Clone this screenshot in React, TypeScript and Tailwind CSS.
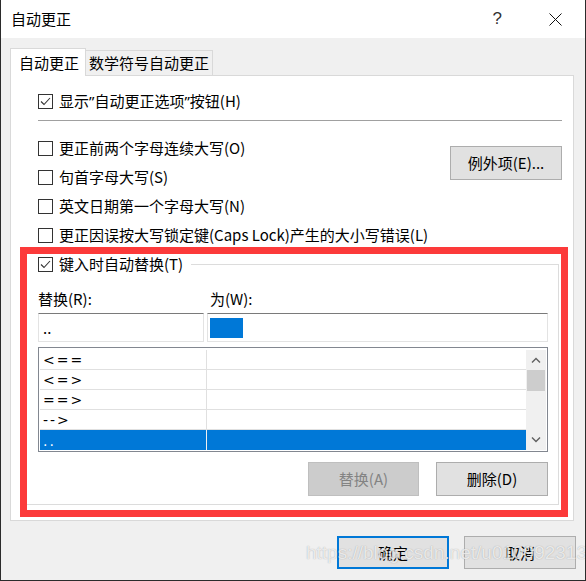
import React from 'react';

const font = { fontFamily: '"Noto Sans CJK SC", "Noto Sans", sans-serif' };
const latin = { fontFamily: '"Noto Sans", sans-serif' };

function CheckBox({ checked, label }: { checked?: boolean; label: React.ReactNode }) {
  return (
    <div className="flex items-center h-[20px] gap-[6px]">
      <div className="w-[15px] h-[15px] border border-[#333333] bg-white flex items-center justify-center shrink-0">
        {checked && (
          <svg width="11" height="11" viewBox="0 0 11 11">
            <path d="M1 5.5 L4 8.5 L10 2" stroke="#333" strokeWidth="1.1" fill="none" />
          </svg>
        )}
      </div>
      <span className="text-[15px] leading-[20px] text-black whitespace-nowrap">{label}</span>
    </div>
  );
}

function Btn({ children, disabled, primary, className }: { children: React.ReactNode; disabled?: boolean; primary?: boolean; className?: string }) {
  let cls = 'bg-[#e1e1e1] border border-[#adadad] text-black';
  if (disabled) cls = 'bg-[#cccccc] border border-[#bfbfbf] text-[#838383]';
  if (primary) cls = 'bg-[#e1e1e1] border-2 border-[#0078d7] text-black';
  return (
    <div className={`flex items-center justify-center text-[15px] leading-[20px] ${cls} ${className ?? ''}`}>{children}</div>
  );
}

const rows = ['<==', '<=>', '==>', '-->', '..'];

export default function App() {
  return (
    <div style={font} className="relative w-[586px] h-[581px] bg-[#f0f0f0] border-l border-r border-b border-[#2b2b2b] overflow-hidden select-none">
      {/* title bar */}
      <div className="h-[38px] bg-white flex items-center pl-[10px] pr-[23px]">
        <span className="text-[15px] leading-[20px] text-black">自动更正</span>
        <span className="ml-auto text-[17px] text-[#333] mr-[47px]" style={{ fontFamily: '"Liberation Sans", sans-serif', fontWeight: 300 }}>?</span>
        <svg width="13" height="13" viewBox="0 0 13 13">
          <path d="M0.5 0.5 L12.5 12.5 M12.5 0.5 L0.5 12.5" stroke="#111" strokeWidth="1" />
        </svg>
      </div>

      {/* tabs */}
      <div className="flex items-end mt-[10px] ml-[9px]">
        <div className="relative z-10 h-[28px] -mb-px bg-white border-l border-t border-r border-[#d9d9d9] pl-[8px] pr-[6px] flex items-center text-[15px] leading-[20px]">
          自动更正
        </div>
        <div className="h-[25px] bg-[#f0f0f0] border-t border-r border-[#d9d9d9] px-[3px] flex items-center text-[15px] leading-[20px]">
          数学符号自动更正
        </div>
      </div>

      {/* panel */}
      <div className="ml-[9px] w-[564px] h-[446px] bg-white border border-[#d9d9d9] pl-[27px] pr-[11px]">
        <div className="mt-[15px]">
          <CheckBox
            checked
            label={
              <>
                显示<span style={latin}>”</span>自动更正选项<span style={latin}>”</span>按钮(H)
              </>
            }
          />
        </div>
        <div className="mt-[9px] h-px bg-[#a0a0a0]" />

        <div className="flex mt-[17px]">
          <div className="flex flex-col gap-[9px]">
            <CheckBox label="更正前两个字母连续大写(O)" />
            <CheckBox label="句首字母大写(S)" />
            <CheckBox label="英文日期第一个字母大写(N)" />
            <CheckBox label="更正因误按大写锁定键(Caps Lock)产生的大小写错误(L)" />
          </div>
          <Btn className="ml-auto mt-[8px] w-[112px] h-[34px]">例外项(E)...</Btn>
        </div>

        {/* red annotation box */}
        <div className="mt-[2px] -ml-[18px] -mr-[6px] h-[270px] border-[7px] border-[#fc3a3a] pt-[10px]">
          <div className="mr-[2px] border-t border-r border-b border-[#dcdcdc] pl-[11px] pr-[10px] pb-[8px]">
            <div className="-mt-[11px] -ml-[11px] pl-[11px] pr-[8px] bg-white w-fit">
              <CheckBox checked label="键入时自动替换(T)" />
            </div>

            <div className="flex mt-[15px] h-[20px] text-[15px] leading-[20px]">
              <span className="w-[169px]">替换(R):</span>
              <span className="ml-[3px]">为(W):</span>
            </div>

            <div className="flex gap-[3px] mt-[4px]">
              <div className="w-[166px] h-[29px] border border-[#e3e3e3] border-t-[#7a7a7a] flex items-center pl-[4px] text-[15px] leading-[20px]">..</div>
              <div className="flex-1 h-[29px] border border-[#e3e3e3] border-t-[#7a7a7a] flex items-center pl-[2px]">
                <div className="w-[33px] h-[20px] bg-[#0078d7]" />
              </div>
            </div>

            <div className="mt-[5px] h-[105px] border border-[#828790] pt-[2px] pl-[1px] pr-[1px] flex">
              <div className="flex-1 flex flex-col">
                {rows.map((r, i) => {
                  const sel = i === rows.length - 1;
                  return (
                    <div key={r} className={`flex h-[20px] ${sel ? 'bg-[#0078d7] text-white' : 'border-b border-[#e0e0e0] text-black'}`}>
                      <div className={`w-[167px] h-full flex items-center pl-[3px] pt-[2px] text-[14px] tracking-[2px] border-r ${sel ? 'border-[#f0f0f0]' : 'border-[#e0e0e0]'}`} style={{ fontFamily: '"DejaVu Sans", sans-serif' }}>
                        {r}
                      </div>
                      <div className="flex-1" />
                    </div>
                  );
                })}
              </div>
              <div className="w-[20px] h-[100px] bg-[#f0f0f0] flex flex-col items-center">
                <div className="h-[20px] flex items-center justify-center">
                  <svg width="10" height="6" viewBox="0 0 10 6">
                    <path d="M1 5.5 L5 1.5 L9 5.5" stroke="#606060" strokeWidth="1.4" fill="none" />
                  </svg>
                </div>
                <div className="w-[18px] h-[21px] bg-[#cdcdcd]" />
                <div className="mt-auto h-[20px] flex items-center justify-center">
                  <svg width="10" height="6" viewBox="0 0 10 6">
                    <path d="M1 0.5 L5 4.5 L9 0.5" stroke="#606060" strokeWidth="1.4" fill="none" />
                  </svg>
                </div>
              </div>
            </div>

            <div className="flex justify-end gap-[17px] mt-[10px]">
              <Btn disabled className="w-[111px] h-[34px]">替换(A)</Btn>
              <Btn className="w-[112px] h-[34px]">删除(D)</Btn>
            </div>
          </div>
        </div>
      </div>

      {/* dialog buttons */}
      <div className="flex justify-end gap-[15px] mt-[15px] mr-[9px]">
        <Btn primary className="w-[112px] h-[33px]">确定</Btn>
        <Btn className="w-[112px] h-[33px]">取消</Btn>
      </div>

      {/* watermark */}
      <div
        className="absolute left-[305px] top-[541px] text-[19px] leading-[24px] text-white/75 whitespace-nowrap"
        style={{ fontFamily: '"Liberation Sans", sans-serif', textShadow: '0 0 1px rgba(90,90,90,0.5)' }}
      >
        https://blog.csdn.net/u010992313
      </div>
    </div>
  );
}
